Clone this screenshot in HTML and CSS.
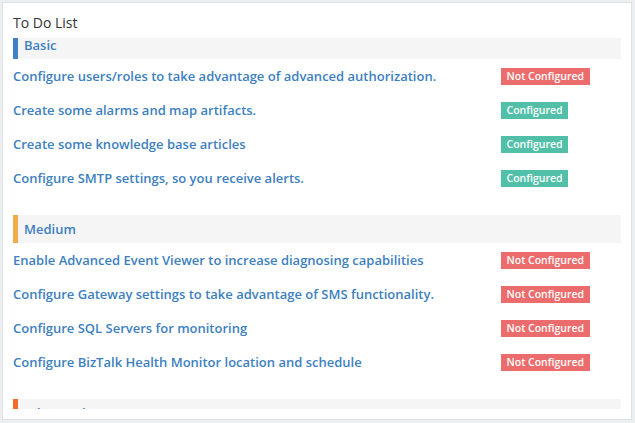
FILE: index.html
```html
<!DOCTYPE html>
<html>
<head>
<meta charset="utf-8">
<link rel="stylesheet" href="styles.css">
</head>
<body>
<div class="card">
  <div class="card-title">To Do List</div>
  <div class="viewport">
    <div class="scroller">
      <section class="group">
        <div class="group-head head-blue">Basic</div>
        <div class="row"><a class="task">Configure users/roles to take advantage of advanced authorization.</a><span class="badge bad">Not Configured</span></div>
        <div class="row"><a class="task">Create some alarms and map artifacts.</a><span class="badge ok">Configured</span></div>
        <div class="row"><a class="task">Create some knowledge base articles</a><span class="badge ok">Configured</span></div>
        <div class="row"><a class="task">Configure SMTP settings, so you receive alerts.</a><span class="badge ok">Configured</span></div>
      </section>
      <section class="group">
        <div class="group-head head-orange">Medium</div>
        <div class="row"><a class="task">Enable Advanced Event Viewer to increase diagnosing capabilities</a><span class="badge bad">Not Configured</span></div>
        <div class="row"><a class="task">Configure Gateway settings to take advantage of SMS functionality.</a><span class="badge bad">Not Configured</span></div>
        <div class="row"><a class="task">Configure SQL Servers for monitoring</a><span class="badge bad">Not Configured</span></div>
        <div class="row"><a class="task">Configure BizTalk Health Monitor location and schedule</a><span class="badge bad">Not Configured</span></div>
      </section>
      <section class="group">
        <div class="group-head head-red">Advanced</div>
        <div class="row"><a class="task">Configure dashboards for your team</a><span class="badge bad">Not Configured</span></div>
      </section>
    </div>
  </div>
</div>
</body>
</html>
```
FILE: styles.css
```css
html, body {
  margin: 0;
  padding: 0;
  background: #eceff2;
}
body {
  padding: 2px 3px 3px 2px;
  font-family: "Open Sans", "Liberation Sans", sans-serif;
}
.card {
  width: 630px;
  height: 418px;
  box-sizing: border-box;
  background: #ffffff;
  border: 1px solid #dce1e6;
  padding: 10px;
  display: flex;
  flex-direction: column;
}
.card-title {
  font-size: 14px;
  line-height: 20px;
  color: #333333;
  margin-bottom: 5px;
}
.viewport {
  flex: 1;
  overflow: hidden;
}
.scroller {
  margin-top: -7px;
}
.group {
  margin-bottom: 20px;
}
.group-head {
  height: 28px;
  line-height: 28px;
  background: #f5f5f5;
  border-left: 5px solid #3c82c4;
  padding-left: 6px;
  font-size: 13px;
  font-weight: 600;
  color: #3d7fbf;
}
.head-orange { border-left-color: #f0ad4e; }
.head-red { border-left-color: #f26b2a; }
.row {
  height: 34px;
  display: grid;
  grid-template-columns: 488px auto;
  align-items: center;
}
.task {
  font-size: 13px;
  font-weight: 600;
  color: #3d7fbf;
  text-decoration: none;
  white-space: nowrap;
}
.badge {
  justify-self: start;
  font-size: 10.5px;
  font-weight: 600;
  line-height: 17px;
  padding: 0 5.5px;
  color: #ffffff;
}
.bad { background: #ec6b6c; }
.ok { background: #52c0a8; }
```
